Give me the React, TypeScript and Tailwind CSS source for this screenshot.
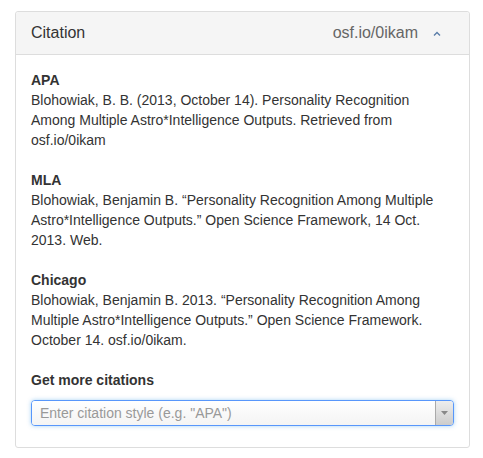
import React from 'react';

const citations = [
  {
    style: 'APA',
    text: 'Blohowiak, B. B. (2013, October 14). Personality Recognition Among Multiple Astro*Intelligence Outputs. Retrieved from osf.io/0ikam',
  },
  {
    style: 'MLA',
    text: 'Blohowiak, Benjamin B. \u201cPersonality Recognition Among Multiple Astro*Intelligence Outputs.\u201d Open Science Framework, 14 Oct. 2013. Web.',
  },
  {
    style: 'Chicago',
    text: 'Blohowiak, Benjamin B. 2013. \u201cPersonality Recognition Among Multiple Astro*Intelligence Outputs.\u201d Open Science Framework. October 14. osf.io/0ikam.',
  },
];

export default function App() {
  return (
    <div
      className="w-[483px] h-[458px] bg-white pt-[11px] pl-[15px] text-[#333]"
      style={{ fontFamily: '"Liberation Sans", Arial, sans-serif' }}
    >
      <div className="w-[455px] border border-[#ddd] rounded-[3px] bg-white">
        <div className="h-[43px] flex items-center justify-between bg-[#f5f5f5] border-b border-[#ddd] pl-[15px] pr-[28px] rounded-t-[3px]">
          <span className="text-[16px] text-[#333]">Citation</span>
          <div className="flex items-center">
            <span className="text-[16px] text-[#666]">osf.io/0ikam</span>
            <svg width="8" height="6" viewBox="0 0 8 6" className="ml-[15px] mt-[1px]">
              <path d="M1 4.5 L4 1.5 L7 4.5" fill="none" stroke="#5a7da8" strokeWidth="1.4" />
            </svg>
          </div>
        </div>
        <div className="px-[15px] pt-[15px] pb-[21px] text-[14px] leading-[20px]">
          {citations.map((c) => (
            <div key={c.style} className="mb-[20px]">
              <div className="font-bold">{c.style}</div>
              <div>{c.text}</div>
            </div>
          ))}
          <div className="font-bold mb-[10px]">Get more citations</div>
          <div className="h-[26px] flex border border-[#5897fb] rounded-[4px] shadow-[0_0_4px_rgba(82,168,236,0.5)] bg-white overflow-hidden">
            <div className="flex-1 flex items-center pl-[8px] text-[#999] text-[14px] bg-gradient-to-b from-white to-[#f4f4f4]">
              Enter citation style (e.g. "APA")
            </div>
            <div className="w-[18px] flex items-center justify-center border-l border-[#aaa] bg-gradient-to-b from-[#eee] to-[#ccc]">
              <svg width="7" height="4" viewBox="0 0 7 4">
                <path d="M0 0 L7 0 L3.5 4 Z" fill="#888" />
              </svg>
            </div>
          </div>
        </div>
      </div>
    </div>
  );
}
